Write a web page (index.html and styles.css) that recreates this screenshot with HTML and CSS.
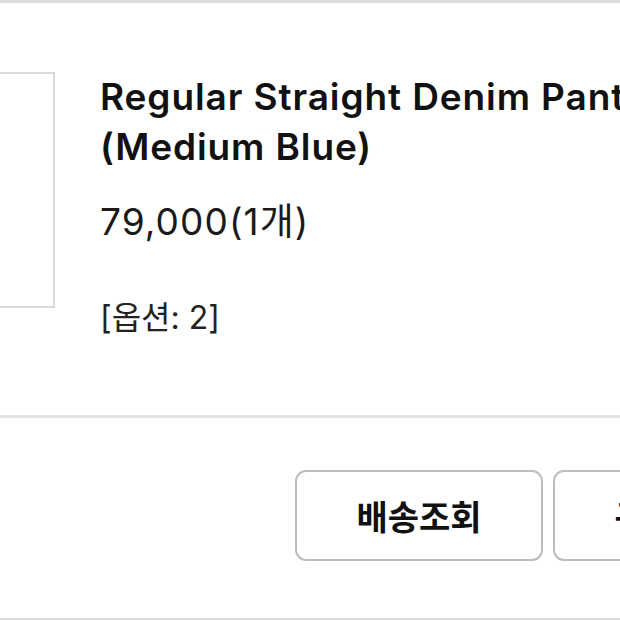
FILE: index.html
```html
<!DOCTYPE html>
<html lang="ko">
<head>
<meta charset="utf-8">
<link rel="stylesheet" href="styles.css">
</head>
<body>
<div class="page">
  <div class="topline"></div>
  <div class="item">
    <div class="thumb"></div>
    <div class="info">
      <div class="title">Regular Straight Denim Pants<br>(Medium Blue)</div>
      <div class="price">79,000(1개)</div>
      <div class="option">[옵션: 2]</div>
    </div>
  </div>
  <div class="divider"></div>
  <div class="actions">
    <button class="btn">배송조회</button>
    <button class="btn">구매확정</button>
  </div>
  <div class="bottomline"></div>
</div>
</body>
</html>
```
FILE: styles.css
```css
html, body {
  margin: 0;
  padding: 0;
  background: #fff;
}
.page {
  width: 620px;
  height: 620px;
  overflow: hidden;
  font-family: Inter, "Noto Sans CJK KR", sans-serif;
  color: #111;
  display: flex;
  flex-direction: column;
}
.topline {
  height: 3px;
  background: #dcdcdc;
  flex-shrink: 0;
}
.item {
  display: flex;
  margin-left: -181px;
  padding-top: 69px;
  gap: 45px;
  height: 343px;
  flex-shrink: 0;
}
.thumb {
  width: 232px;
  height: 232px;
  border: 2px solid #d9d9d9;
  flex-shrink: 0;
}
.info {
  display: flex;
  flex-direction: column;
  white-space: nowrap;
}
.title {
  font-size: 37px;
  line-height: 50px;
  font-weight: 600;
  color: #111;
  margin-top: 0;
  letter-spacing: 0.9px;
}
.price {
  font-size: 37px;
  line-height: 50px;
  margin-top: 25px;
  color: #1a1a1a;
  letter-spacing: 1.1px;
}
.option {
  font-size: 32px;
  line-height: 50px;
  margin-top: 46px;
  color: #222;
}
.divider {
  height: 3px;
  background: #e2e2e2;
  flex-shrink: 0;
}
.actions {
  display: flex;
  gap: 10px;
  padding-left: 295px;
  padding-top: 52px;
  height: 148px;
  flex-shrink: 0;
}
.btn {
  flex-shrink: 0;
  width: 248px;
  height: 91px;
  border: 2px solid #bdbdbd;
  border-radius: 11px;
  background: #fff;
  font-family: "Noto Sans CJK KR", sans-serif;
  font-size: 34px;
  font-weight: 700;
  color: #111;
  padding: 0;
}
.bottomline {
  height: 3px;
  background: #dcdcdc;
  flex-shrink: 0;
}
```
